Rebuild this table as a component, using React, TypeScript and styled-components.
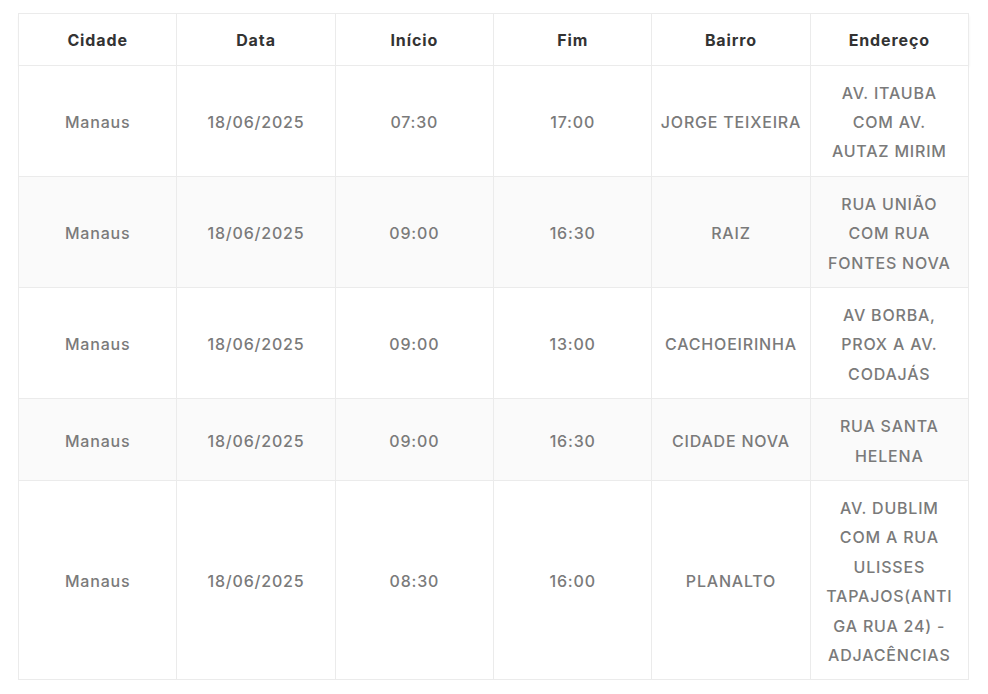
import { createGlobalStyle, styled } from "styled-components";

const GlobalStyle = createGlobalStyle`
  html, body {
    margin: 0;
    padding: 0;
    background: #ffffff;
  }
  body {
    font-family: "Inter", "Noto Sans", sans-serif;
  }
`;

type Row = {
  cidade: string;
  data: string;
  inicio: string;
  fim: string;
  bairro: string;
  endereco: string[];
};

const ROWS: Row[] = [
  {
    cidade: "Manaus",
    data: "18/06/2025",
    inicio: "07:30",
    fim: "17:00",
    bairro: "JORGE TEIXEIRA",
    endereco: ["AV. ITAUBA", "COM AV.", "AUTAZ MIRIM"],
  },
  {
    cidade: "Manaus",
    data: "18/06/2025",
    inicio: "09:00",
    fim: "16:30",
    bairro: "RAIZ",
    endereco: ["RUA UNIÃO", "COM RUA", "FONTES NOVA"],
  },
  {
    cidade: "Manaus",
    data: "18/06/2025",
    inicio: "09:00",
    fim: "13:00",
    bairro: "CACHOEIRINHA",
    endereco: ["AV BORBA,", "PROX A AV.", "CODAJÁS"],
  },
  {
    cidade: "Manaus",
    data: "18/06/2025",
    inicio: "09:00",
    fim: "16:30",
    bairro: "CIDADE NOVA",
    endereco: ["RUA SANTA", "HELENA"],
  },
  {
    cidade: "Manaus",
    data: "18/06/2025",
    inicio: "08:30",
    fim: "16:00",
    bairro: "PLANALTO",
    endereco: [
      "AV. DUBLIM",
      "COM A RUA",
      "ULISSES",
      "TAPAJOS(ANTI",
      "GA RUA 24) -",
      "ADJACÊNCIAS",
    ],
  },
];

const HEADERS = ["Cidade", "Data", "Início", "Fim", "Bairro", "Endereço"];

const App = () => {
  return (
    <>
      <GlobalStyle />
      <Page>
        <Table>
          <thead>
            <HeadRow>
              {HEADERS.map((h) => (
                <HeadCell key={h}>{h}</HeadCell>
              ))}
            </HeadRow>
          </thead>
          <tbody>
            {ROWS.map((r, i) => (
              <BodyRow key={i} $striped={i % 2 === 1}>
                <Cell>{r.cidade}</Cell>
                <Cell>{r.data}</Cell>
                <Cell>{r.inicio}</Cell>
                <Cell>{r.fim}</Cell>
                <Cell>{r.bairro}</Cell>
                <Cell>
                  {r.endereco.map((line, j) => (
                    <Line key={j}>{line}</Line>
                  ))}
                </Cell>
              </BodyRow>
            ))}
          </tbody>
        </Table>
      </Page>
    </>
  );
};

const Page = styled.div`
  padding: 13px 19px 0 18px;
`;

const Table = styled.table`
  width: 951px;
  border-collapse: collapse;
  table-layout: fixed;
  border: 1px solid #ebebeb;
`;

const HeadRow = styled.tr`
  box-shadow: 0 2px 3px rgba(0, 0, 0, 0.06);
`;

const HeadCell = styled.th`
  border: 1px solid #ebebeb;
  padding: 12px 8px 9px;
  font-size: 16px;
  line-height: 29.5px;
  font-weight: 700;
  letter-spacing: 0.9px;
  color: #333333;
  text-align: center;
`;

const BodyRow = styled.tr<{ $striped: boolean }>`
  background: ${(p) => (p.$striped ? "#fafafa" : "#ffffff")};
`;

const Cell = styled.td`
  border: 1px solid #ebebeb;
  padding: 13px 8px 9px;
  font-size: 16px;
  line-height: 29.4px;
  font-weight: 500;
  letter-spacing: 0.8px;
  color: #7a7a7a;
  text-align: center;
  vertical-align: middle;
`;

const Line = styled.span`
  display: block;
  white-space: nowrap;
`;

export default App;
